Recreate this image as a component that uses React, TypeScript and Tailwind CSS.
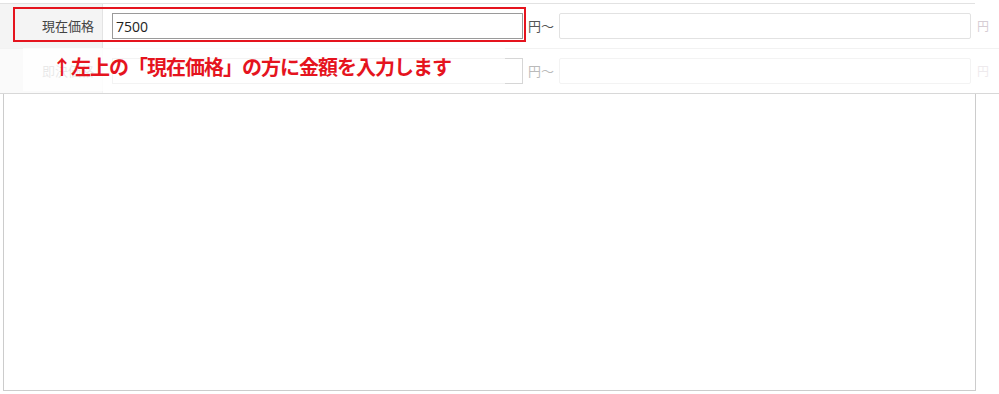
import React from "react";

function Row({ label, value, faded }: { label: string; value?: string; faded?: boolean }) {
  return (
    <div className={`flex h-[44px] w-[999px] items-center ${faded ? "opacity-40" : ""}`}>
      <div className="flex h-full w-[103px] shrink-0 items-center justify-end border-r border-[#e4e4e4] bg-[#f4f4f4] pr-[8px] text-[13px] text-[#444]">
        {label}
      </div>
      <div className="ml-[9px] flex h-[26px] w-[411px] items-center border border-[#9a9a9a] bg-white px-[3px] text-[14px] text-[#222] [font-family:'Open_Sans','Noto_Sans',sans-serif]">
        {value}
      </div>
      <div className="ml-[5px] w-[31px] text-[13px] text-[#555]">円〜</div>
      <div className="h-[26px] w-[412px] rounded-[2px] border border-[#e2e2e2] bg-white" />
      <div className="ml-[6px] text-[12px] text-[#d6cdd4]">円</div>
    </div>
  );
}

export default function App() {
  return (
    <div
      className="relative h-[394px] w-[999px] overflow-hidden bg-white"
      style={{ fontFamily: "'Noto Sans CJK JP', 'Noto Sans', sans-serif" }}
    >
      <div className="h-[3px]" />
      <div className="h-px w-[975px] bg-[#e2e2e2]" />
      <Row label="現在価格" value="7500" />
      <div className="h-px w-[999px] bg-[#f2f2f2]" />
      <Row label="即決価格" faded />
      <div className="h-px w-[999px] bg-[#d8d8d8]" />
      <div className="ml-[3px] h-[297px] w-[973px] border-x border-b border-[#cccccc] bg-white" />

      <div className="absolute left-[13px] top-[7px] h-[35px] w-[513px] border-2 border-[#e5141e]" />
      <div className="absolute left-[23px] top-[48px] flex h-[43px] w-[482px] items-center bg-white/70 pl-[29px]">
        <span className="-mt-[5px] text-[20px] font-bold leading-none tracking-[-1px] text-[#e5141e]">
          ↑左上の「現在価格」の方に金額を入力します
        </span>
      </div>
    </div>
  );
}
